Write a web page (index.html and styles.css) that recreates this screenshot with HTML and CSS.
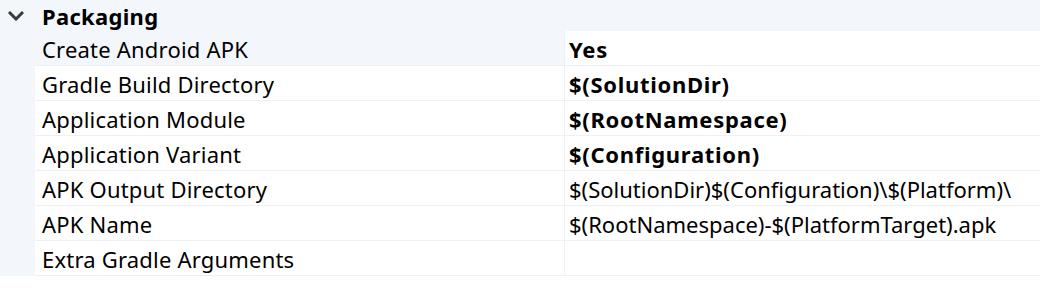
FILE: index.html
```html
<!DOCTYPE html>
<html>
<head>
<meta charset="utf-8">
<link rel="stylesheet" href="styles.css">
</head>
<body>
<div class="grid">
  <div class="category">
    <span class="chevron"><svg width="18" height="11" viewBox="0 0 18 11"><path d="M2 2 L9 9 L16 2" fill="none" stroke="#3a3a3a" stroke-width="3"/></svg></span>
    <span class="cat-name">Packaging</span>
  </div>
  <div class="rows">
    <div class="row selected"><div class="name">Create Android APK</div><div class="value bold">Yes</div></div>
    <div class="row"><div class="name">Gradle Build Directory</div><div class="value bold">$(SolutionDir)</div></div>
    <div class="row"><div class="name">Application Module</div><div class="value bold">$(RootNamespace)</div></div>
    <div class="row"><div class="name">Application Variant</div><div class="value bold">$(Configuration)</div></div>
    <div class="row"><div class="name">APK Output Directory</div><div class="value">$(SolutionDir)$(Configuration)\$(Platform)\</div></div>
    <div class="row"><div class="name">APK Name</div><div class="value">$(RootNamespace)-$(PlatformTarget).apk</div></div>
    <div class="row"><div class="name">Extra Gradle Arguments</div><div class="value"></div></div>
  </div>
</div>
</body>
</html>
```
FILE: styles.css
```css
html, body {
  margin: 0;
  padding: 0;
  background: #ffffff;
}
body {
  font-family: "Noto Sans", "Open Sans", sans-serif;
  font-size: 22px;
  color: #000;
  width: 1040px;
  height: 288px;
  overflow: hidden;
}
.grid {
  background: #f3f6fb;
}
.category {
  height: 31px;
  display: flex;
  align-items: center;
}
.chevron {
  width: 42px;
  display: flex;
  padding-left: 7px;
  box-sizing: border-box;
}
.chevron svg { display: block; }
.cat-name {
  font-weight: 700;
  font-size: 22px;
  letter-spacing: 0.3px;
}
.rows {
  margin-left: 35px;
  background: #ffffff;
}
.row {
  display: grid;
  grid-template-columns: 530px 1fr;
  height: 35px;
  box-sizing: border-box;
  border-bottom: 1px solid #eef0f3;
}
.name {
  padding-left: 7px;
  padding-top: 1px;
  display: flex;
  align-items: center;
  white-space: nowrap;
  letter-spacing: 0.2px;
  border-right: 1px solid #eef0f3;
}
.row.selected .name {
  background: #f3f6fb;
}
.value {
  padding-left: 4px;
  padding-top: 1px;
  display: flex;
  align-items: center;
  white-space: nowrap;
}
.bold {
  font-weight: 700;
  letter-spacing: 0.7px;
}
```
